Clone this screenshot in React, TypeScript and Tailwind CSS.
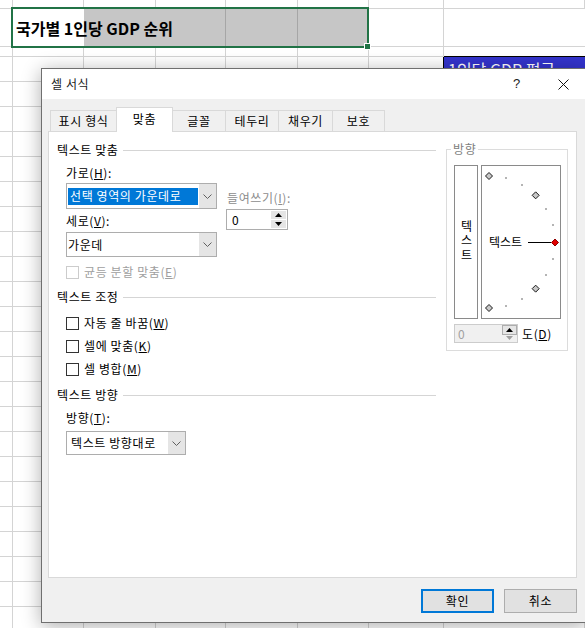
import React from "react";

const font = "font-['Noto_Sans_CJK_KR','Noto_Sans',sans-serif]";

const cols = [
  "w-[13px]",
  "w-[71px]",
  "w-[72px]",
  "w-[70px]",
  "w-[72px]",
  "w-[71px]",
  "w-[75px]",
  "flex-1",
];

function PlainRow({ h }: { h: string }) {
  return (
    <div className={`flex shrink-0 ${h}`}>
      {cols.map((w, i) => (
        <div key={i} className={`${w} shrink-0 border-r border-b border-[#d4d4d4]`} />
      ))}
    </div>
  );
}

function Sheet() {
  return (
    <div className="absolute inset-0 flex flex-col">
      <PlainRow h="h-[9px]" />
      {/* title row */}
      <div className="flex shrink-0 h-[38px]">
        <div className="w-[13px] shrink-0 border-r border-b border-[#d4d4d4]" />
        <div className="w-[71px] shrink-0 border-b border-[#d4d4d4] relative z-10 flex items-center">
          <span className="pl-[3px] whitespace-nowrap text-[16px] font-bold leading-[20px] tracking-normal">
            국가별 1인당 GDP 순위
          </span>
        </div>
        <div className="w-[142px] shrink-0 bg-[#c6c6c6] border-r border-[#a6a6a6]" />
        <div className="w-[72px] shrink-0 bg-[#c6c6c6] border-r border-[#a6a6a6]" />
        <div className="w-[71px] shrink-0 bg-[#c6c6c6] border-r border-b border-[#d4d4d4]" />
        <div className="w-[75px] shrink-0 border-r border-b border-[#d4d4d4]" />
        <div className="flex-1 border-b border-[#d4d4d4]" />
      </div>
      <div className="flex shrink-0 h-[10px]">
        {cols.slice(0, 7).map((w, i) => (
          <div key={i} className={`${w} shrink-0 border-r border-b border-[#d4d4d4]`} />
        ))}
        <div className="flex-1 border-b border-black" />
      </div>
      <div className="flex shrink-0 h-[25px]">
        {cols.slice(0, 6).map((w, i) => (
          <div key={i} className={`${w} shrink-0 border-r border-b border-[#d4d4d4]`} />
        ))}
        <div className="w-[75px] shrink-0 border-r border-b border-r-black border-b-[#d4d4d4]" />
        <div className="flex-1 bg-[#3333cc] overflow-hidden">
          <span className="pl-[4px] text-white text-[16px] leading-[20px] whitespace-nowrap tracking-normal">
            1인당 GDP 평균
          </span>
        </div>
      </div>
      {Array.from({ length: 22 }).map((_, i) => (
        <PlainRow key={i} h="h-[25px]" />
      ))}

      {/* selection outline */}
      <div className="absolute left-[11px] top-[7px] w-[358px] h-[41px] border-2 border-[#217346] z-20" />
      <div className="absolute left-[364px] top-[43px] w-[7px] h-[7px] bg-[#217346] border border-white z-20" />
    </div>
  );
}

function Chevron() {
  return (
    <svg width="9" height="5" viewBox="0 0 9 5">
      <path d="M0.5 0.5 L4.5 4.5 L8.5 0.5" stroke="#606060" fill="none" />
    </svg>
  );
}

function Tri({ up, color }: { up?: boolean; color: string }) {
  return (
    <svg width="7" height="4" viewBox="0 0 7 4">
      <path d={up ? "M0 4 L3.5 0 L7 4Z" : "M0 0 L3.5 4 L7 0Z"} fill={color} />
    </svg>
  );
}

function GroupHeader({ label }: { label: string }) {
  return (
    <div className="h-[20px] flex items-center">
      <span className="text-[12px] leading-[16px]">{label}</span>
      <div className="flex-1 ml-[4px] border-t border-[#d5d5d5]" />
    </div>
  );
}

function CheckRow({ children, disabled }: { children: React.ReactNode; disabled?: boolean }) {
  return (
    <div className="h-[18px] flex items-center pl-[9px]">
      <div
        className={
          disabled
            ? "w-[13px] h-[13px] border border-[#cccccc] bg-white"
            : "w-[13px] h-[13px] border border-[#333333] bg-white"
        }
      />
      <span
        className={
          disabled
            ? "ml-[5px] text-[12px] leading-[16px] text-[#a0a0a0]"
            : "ml-[5px] text-[12px] leading-[16px]"
        }
      >
        {children}
      </span>
    </div>
  );
}

function Orientation() {
  const cx = 7;
  const cy = 76;
  const r = 66;
  const pt = (deg: number) => {
    const a = (deg * Math.PI) / 180;
    return [cx + r * Math.cos(a), cy - r * Math.sin(a)];
  };
  const diamonds = [90, 45, -45, -90];
  const dots = [75, 60, 30, 15, -15, -30, -60, -75];
  const dia = (x: number, y: number) =>
    `M${x} ${y - 3.5} L${x + 3.5} ${y} L${x} ${y + 3.5} L${x - 3.5} ${y}Z`;
  return (
    <svg className="absolute inset-0" width="78" height="152" viewBox="0 0 78 152">
      {dots.map((d) => {
        const [x, y] = pt(d);
        return <rect key={d} x={Math.round(x) - 1} y={Math.round(y) - 1} width="2" height="2" fill="#b4b4b4" />;
      })}
      {diamonds.map((d) => {
        const [x, y] = pt(d);
        return <path key={d} d={dia(x, y)} fill="#c8c8c8" stroke="#1a1a1a" strokeWidth="1" />;
      })}
      <line x1="46" y1="76.5" x2="69" y2="76.5" stroke="#000" strokeWidth="1" />
      <path d={dia(73, 76.5)} fill="#e00000" stroke="#900000" strokeWidth="1" />
    </svg>
  );
}

function AlignPanel() {
  return (
    <div className="ml-[6px] w-[529px] h-[447px] shrink-0 border border-[#d9d9d9] bg-white flex">
      {/* left column */}
      <div className="w-[387px] shrink-0 pl-[8px] pt-[8px] flex flex-col">
        <GroupHeader label="텍스트 맞춤" />
        <div className="mt-[5px] h-[16px] pl-[9px] text-[12px] leading-[16px]">
          가로(<u>H</u>):
        </div>
        <div className="flex pl-[9px]">
          <div className="flex flex-col">
            <div className="mt-[2px] w-[151px] h-[26px] border border-[#adadad] bg-white flex">
              <div className="flex-1 flex items-center pl-[1px]">
                <div className="w-[130px] h-[17px] bg-[#0078d7] text-white text-[12px] leading-[16px] pl-[2px] flex items-center whitespace-nowrap">
                  선택 영역의 가운데로
                </div>
              </div>
              <div className="w-[17px] bg-[#e5e5e5] flex items-center justify-center">
                <Chevron />
              </div>
            </div>
            <div className="mt-[4px] h-[16px] text-[12px] leading-[16px]">
              세로(<u>V</u>):
            </div>
            <div className="mt-[3px] w-[151px] h-[25px] border border-[#adadad] bg-white flex">
              <div className="flex-1 flex items-center pl-[1px] text-[12px] leading-[16px]">가운데</div>
              <div className="w-[17px] bg-[#e5e5e5] flex items-center justify-center">
                <Chevron />
              </div>
            </div>
          </div>
          <div className="ml-[10px] flex flex-col">
            <div className="mt-[9px] h-[16px] text-[12px] leading-[16px] text-[#8d8d8d] whitespace-nowrap">
              들여쓰기(<u>I</u>):
            </div>
            <div className="mt-[3px] -ml-px w-[62px] h-[21px] border border-[#adadad] bg-white flex">
              <div className="flex-1 flex items-center pl-[5px] text-[12px] leading-[16px]">0</div>
              <div className="w-[15px] my-[1px] mr-[1px] flex flex-col gap-px">
                <div className="flex-1 bg-[#e5e5e5] flex items-center justify-center">
                  <Tri up color="#000" />
                </div>
                <div className="flex-1 bg-[#e5e5e5] flex items-center justify-center">
                  <Tri color="#000" />
                </div>
              </div>
            </div>
          </div>
        </div>
        <div className="mt-[6px]">
          <CheckRow disabled>
            균등 분할 맞춤(<u>E</u>)
          </CheckRow>
        </div>
        <div className="mt-[6px]">
          <GroupHeader label="텍스트 조정" />
        </div>
        <div className="mt-[7px]">
          <CheckRow>
            자동 줄 바꿈(<u>W</u>)
          </CheckRow>
        </div>
        <div className="mt-[5px]">
          <CheckRow>
            셀에 맞춤(<u>K</u>)
          </CheckRow>
        </div>
        <div className="mt-[5px]">
          <CheckRow>
            셀 병합(<u>M</u>)
          </CheckRow>
        </div>
        <div className="mt-[7px]">
          <GroupHeader label="텍스트 방향" />
        </div>
        <div className="mt-[5px] h-[16px] pl-[9px] text-[12px] leading-[16px]">
          방향(<u>T</u>):
        </div>
        <div className="mt-[5px] ml-[9px] w-[120px] h-[24px] border border-[#adadad] bg-white flex">
          <div className="flex-1 flex items-center pl-[4px] text-[12px] leading-[16px] whitespace-nowrap">
            텍스트 방향대로
          </div>
          <div className="w-[17px] bg-[#e5e5e5] flex items-center justify-center">
            <Chevron />
          </div>
        </div>
      </div>

      {/* orientation group */}
      <div className="ml-[10px] mt-[17px] w-[122px] h-[202px] shrink-0 border border-[#dcdcdc] relative pt-[15px] pl-[7px]">
        <span className="absolute -top-[9px] left-[4px] bg-white px-[2px] text-[12px] leading-[16px] text-[#808080]">
          방향
        </span>
        <div className="flex">
          <div className="w-[24px] h-[154px] border border-[#8a8a8a] flex items-center justify-center">
            <span className="[writing-mode:vertical-rl] text-[12px] leading-[16px] tracking-[2.5px]">텍스트</span>
          </div>
          <div className="ml-[3px] w-[80px] h-[154px] border border-[#8a8a8a] relative">
            <Orientation />
            <span className="absolute left-[7px] top-[68px] text-[12px] leading-[16px] tracking-normal">텍스트</span>
          </div>
        </div>
        <div className="mt-[5px] flex items-center">
          <div className="w-[64px] h-[19px] border border-[#cccccc] bg-[#f0f0f0] flex">
            <div className="flex-1 flex items-center pl-[3px] text-[12px] leading-[16px] text-[#a0a0a0]">0</div>
            <div className="w-[15px] flex flex-col">
              <div className="flex-1 bg-[#e5e5e5] border border-[#adadad] flex items-center justify-center">
                <Tri up color="#000" />
              </div>
              <div className="flex-1 bg-[#f0f0f0] flex items-center justify-center">
                <Tri color="#a0a0a0" />
              </div>
            </div>
          </div>
          <span className="ml-[4px] text-[12px] leading-[16px]">
            도(<u>D</u>)
          </span>
        </div>
      </div>
    </div>
  );
}

const tabs = [
  { label: "표시 형식", w: "w-[67px]" },
  { label: "맞춤", w: "w-[57px]", active: true },
  { label: "글꼴", w: "w-[53px]" },
  { label: "테두리", w: "w-[53px]" },
  { label: "채우기", w: "w-[54px]" },
  { label: "보호", w: "w-[52px]" },
];

function Dialog() {
  return (
    <div className="absolute left-[41px] top-[68px] w-[546px] h-[555px] border border-[#6f6f6f] bg-[#f0f0f0] flex flex-col shadow-[0_3px_18px_rgba(0,0,0,0.32)] z-30">
      {/* title bar */}
      <div className="h-[30px] bg-white flex items-center shrink-0">
        <span className="pl-[9px] text-[12px] leading-[16px] text-[#1b1b1b]">셀 서식</span>
        <div className="ml-auto flex h-full">
          <div className="w-[46px] flex items-center justify-center text-[13px] font-['Liberation_Sans',sans-serif] text-[#222]">
            ?
          </div>
          <div className="w-[46px] flex items-center justify-center">
            <svg width="11" height="11" viewBox="0 0 11 11">
              <path d="M0.5 0.5 L10.5 10.5 M10.5 0.5 L0.5 10.5" stroke="#111" strokeWidth="1" />
            </svg>
          </div>
        </div>
      </div>

      <div className="flex-1 flex flex-col pt-[8px]">
        {/* tabs */}
        <div className="ml-[8px] h-[24px] flex items-start relative z-10 shrink-0">
          {tabs.map((t, i) =>
            t.active ? (
              <div
                key={t.label}
                className={`${t.w} -ml-px h-[25px] bg-white border-t border-l border-r border-[#d9d9d9]`}
              >
                <div className="h-[21px] flex items-center justify-center text-[12px] leading-[16px]">
                  {t.label}
                </div>
              </div>
            ) : (
              <div
                key={t.label}
                className={`${t.w} ${i === 0 ? "border-l" : ""} mt-[3px] h-[21px] border-t border-r border-[#d9d9d9] flex items-center justify-center text-[12px] leading-[16px] whitespace-nowrap`}
              >
                {t.label}
              </div>
            )
          )}
        </div>

        <AlignPanel />

        {/* buttons */}
        <div className="mt-[11px] flex justify-end gap-[10px] pr-[9px]">
          <div className="w-[73px] h-[24px] bg-[#e1e1e1] border-2 border-[#0078d7] flex items-center justify-center text-[12px] leading-[16px]">
            확인
          </div>
          <div className="w-[73px] h-[24px] bg-[#e1e1e1] border border-[#adadad] flex items-center justify-center text-[12px] leading-[16px]">
            취소
          </div>
        </div>
      </div>
    </div>
  );
}

export default function App() {
  return (
    <div className={`relative w-[585px] h-[628px] overflow-hidden bg-white text-black tracking-[0.6px] ${font}`}>
      <Sheet />
      <Dialog />
    </div>
  );
}
